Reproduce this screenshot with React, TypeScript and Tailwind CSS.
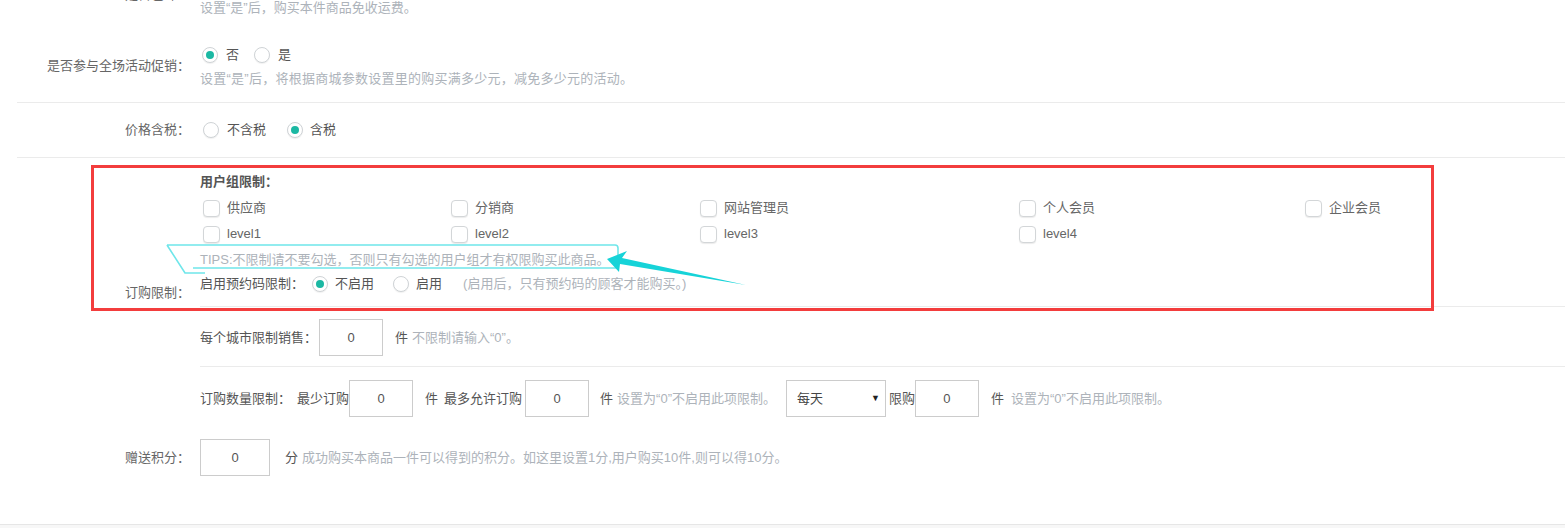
import React from "react";

const Radio = ({ checked, className = "" }: { checked?: boolean; className?: string }) => (
  <span
    className={`inline-flex items-center justify-center w-[16px] h-[16px] rounded-full border border-[#cfd3d6] bg-white shadow-[0_1px_1px_rgba(0,0,0,0.06)] ${className}`}
  >
    {checked && <span className="w-[8px] h-[8px] rounded-full bg-[#1bb8a3]" />}
  </span>
);

const Checkbox = ({ label }: { label: string }) => (
  <div className="flex items-center h-[26px] pl-[3px]">
    <span className="w-[17px] h-[17px] rounded-[4px] border border-[#d3d6d8] bg-white shadow-[0_1px_1px_rgba(0,0,0,0.08)]" />
    <span className="ml-[7px] text-[#666]">{label}</span>
  </div>
);

const Input = ({ w = "w-[64px]" }: { w?: string }) => (
  <div className={`${w} h-[37px] border border-[#ccc] flex items-center justify-center text-[#555] bg-white`}>0</div>
);

const Hint = ({ children, className = "" }: { children: React.ReactNode; className?: string }) => (
  <span className={`text-[#adb3ba] ${className}`}>{children}</span>
);

export default function App() {
  return (
    <div
      className="relative w-[1565px] h-[528px] overflow-hidden bg-white text-[13px] text-[#666]"
      style={{ fontFamily: '"Liberation Sans", "Noto Sans CJK SC", sans-serif' }}
    >
      <div className="pl-[17px] mt-[-40px]">
        {/* 是否包邮 */}
        <div className="flex items-center pt-[12px] pb-[13px]">
          <div className="w-[173px] text-right">是否包邮：</div>
          <div className="ml-[10px] flex flex-col">
            <div className="flex items-center h-[24px]">
              <Radio className="ml-[2px]" />
              <span className="ml-[8px]">否</span>
              <Radio checked className="ml-[15px]" />
              <span className="ml-[8px]">是</span>
            </div>
            <div className="h-[20px] mt-[2px] flex items-center">
              <Hint>设置“是”后，购买本件商品免收运费。</Hint>
            </div>
          </div>
        </div>

        {/* 是否参与全场活动促销 */}
        <div className="flex items-center pt-[12px] pb-[13px] border-b border-[#ebebeb]">
          <div className="w-[173px] text-right">是否参与全场活动促销：</div>
          <div className="ml-[10px] flex flex-col">
            <div className="flex items-center h-[24px] text-[#555]">
              <Radio checked className="ml-[2px]" />
              <span className="ml-[8px]">否</span>
              <Radio className="ml-[15px]" />
              <span className="ml-[8px]">是</span>
            </div>
            <div className="h-[20px] mt-[2px] flex items-center">
              <Hint className="tracking-[0.25px]">设置“是”后，将根据商城参数设置里的购买满多少元，减免多少元的活动。</Hint>
            </div>
          </div>
        </div>

        {/* 价格含税 */}
        <div className="flex items-center pt-[15px] pb-[15px] border-b border-[#ebebeb]">
          <div className="w-[173px] text-right">价格含税：</div>
          <div className="ml-[10px] flex items-center h-[24px] text-[#555]">
            <Radio className="ml-[3px]" />
            <span className="ml-[8px]">不含税</span>
            <Radio checked className="ml-[21px]" />
            <span className="ml-[7px]">含税</span>
          </div>
        </div>

        {/* 订购限制 */}
        <div className="flex items-center">
          <div className="w-[173px] text-right">订购限制：</div>
          <div className="ml-[10px] flex-1 flex flex-col">
            <div className="pt-[14px] pb-[10px] border-b border-[#ebebeb]">
              <div className="h-[20px] flex items-center font-bold text-[#555]">用户组限制：</div>
              <div className="mt-[3px] grid grid-cols-[248px_249px_319px_286px_1fr]">
                <Checkbox label="供应商" />
                <Checkbox label="分销商" />
                <Checkbox label="网站管理员" />
                <Checkbox label="个人会员" />
                <Checkbox label="企业会员" />
                <Checkbox label="level1" />
                <Checkbox label="level2" />
                <Checkbox label="level3" />
                <Checkbox label="level4" />
                <div />
              </div>
              <div className="h-[25px] pt-[1px] flex items-center">
                <Hint>TIPS:不限制请不要勾选，否则只有勾选的用户组才有权限购买此商品。</Hint>
              </div>
              <div className="h-[24px] flex items-center text-[#555]">
                <span>启用预约码限制：</span>
                <Radio checked className="ml-[8px]" />
                <span className="ml-[7px]">不启用</span>
                <Radio className="ml-[19px]" />
                <span className="ml-[7px]">启用</span>
                <Hint className="ml-[21px]">(启用后，只有预约码的顾客才能购买。)</Hint>
              </div>
            </div>

            <div className="pt-[12px] pb-[10px] border-b border-[#ebebeb] flex items-center text-[#555]">
              <span>每个城市限制销售：</span>
              <div className="ml-[2px]">
                <Input />
              </div>
              <span className="ml-[12px]">件</span>
              <Hint className="ml-[4px]">不限制请输入“0”。</Hint>
            </div>

            <div className="pt-[13px] pb-[11px] flex items-center text-[#555]">
              <span>订购数量限制：</span>
              <span className="ml-[6px]">最少订购</span>
              <Input />
              <span className="ml-[12px]">件</span>
              <span className="ml-[6px]">最多允许订购</span>
              <div className="ml-[3px]">
                <Input />
              </div>
              <span className="ml-[11px]">件</span>
              <Hint className="ml-[4px]">设置为“0”不启用此项限制。</Hint>
              <div className="ml-[10px] w-[100px] h-[37px] border border-[#ccc] flex items-center justify-between pl-[10px] pr-[5px] text-[#444]">
                <span>每天</span>
                <span className="text-[9px] text-[#222]">▼</span>
              </div>
              <span className="ml-[3px]">限购</span>
              <Input />
              <span className="ml-[12px]">件</span>
              <Hint className="ml-[7px]">设置为“0”不启用此项限制。</Hint>
            </div>
          </div>
        </div>

        {/* 赠送积分 */}
        <div className="flex items-center pt-[11px] pb-[48px]">
          <div className="w-[173px] text-right">赠送积分：</div>
          <div className="ml-[10px] flex items-center text-[#555]">
            <Input w="w-[70px]" />
            <span className="ml-[15px]">分</span>
            <Hint className="ml-[4px]">成功购买本商品一件可以得到的积分。如这里设置1分,用户购买10件,则可以得10分。</Hint>
          </div>
        </div>
      </div>
      <div className="border-t border-[#e6e6e6] bg-[#f7f7f7] h-[10px]" />

      {/* annotations */}
      <div className="absolute left-[91px] top-[165px] w-[1343px] h-[146px] border-[3px] border-[#f33d3d] pointer-events-none" />
      <svg className="absolute left-0 top-0 pointer-events-none" width="1565" height="528" viewBox="0 0 1565 528">
        <path
          d="M167 245 L615 245 Q618 245 618 248 L618 265 Q618 268 615 268 L193 268 M167 245 L185 273 L205 273"
          fill="none"
          stroke="#6fe6ea"
          strokeWidth="1.6"
        />
        <polygon points="607,259 627,251 622,258 746,285 620,264 619,272" fill="#16d3d8" />
      </svg>
    </div>
  );
}
